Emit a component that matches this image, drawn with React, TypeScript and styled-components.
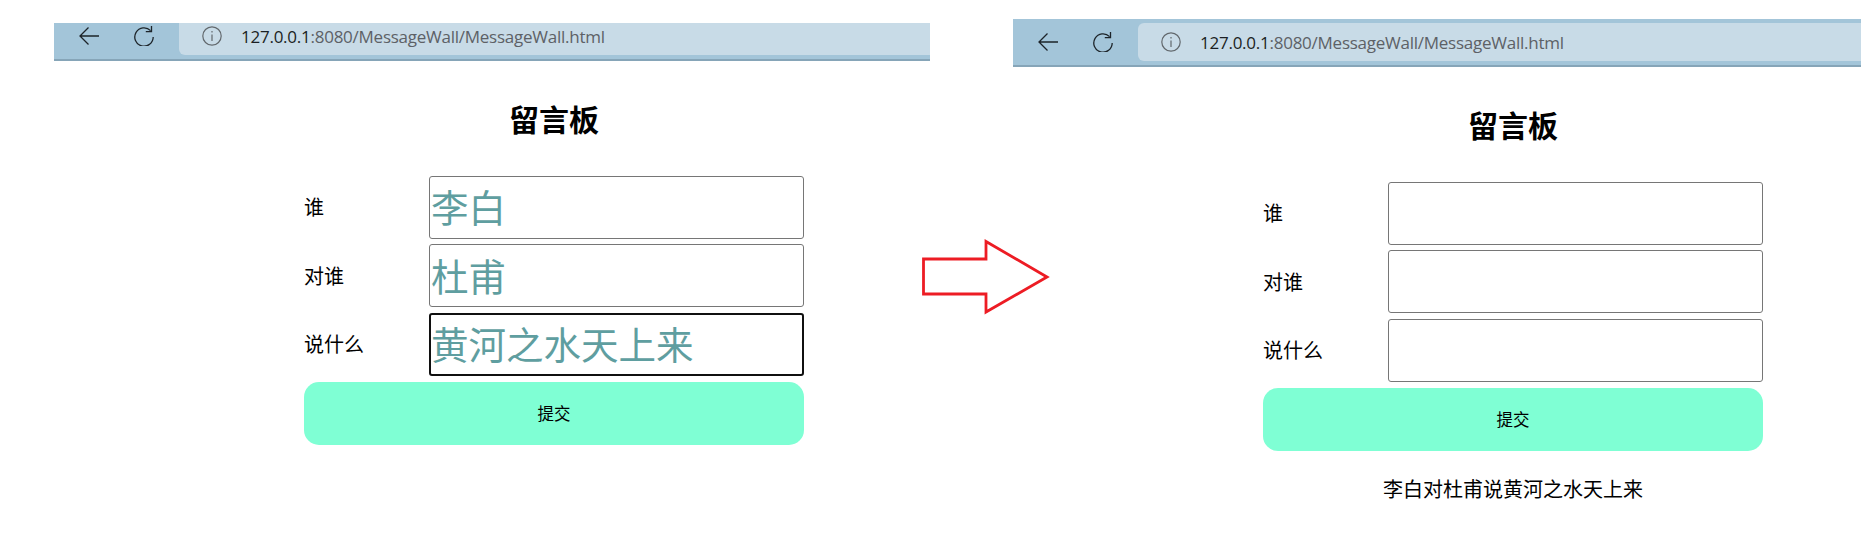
import React from 'react'
import styled, { createGlobalStyle } from 'styled-components'

const GlobalStyle = createGlobalStyle`
  html, body {
    margin: 0;
    padding: 0;
    background: #fff;
    font-family: "Noto Sans CJK SC", "Liberation Sans", sans-serif;
  }
`

const Page = styled.div`
  position: relative;
  display: flex;
  width: 1861px;
  height: 544px;
  overflow: hidden;
`
const Panel = styled.section<{ $left: number; $top: number; $width: number }>`
  margin-left: ${p => p.$left}px;
  margin-top: ${p => p.$top}px;
  width: ${p => p.$width}px;
  flex: none;
`
// the first screenshot is cropped at the top, flex-end lets the bar clip there
const Toolbar = styled.div<{ $height: number }>`
  display: flex;
  align-items: flex-end;
  height: ${p => p.$height}px;
  box-sizing: border-box;
  overflow: hidden;
  background: #a3c5d9;
  border-bottom: 2px solid #86a5b8;
  padding-bottom: 4px;
`
const NavIcons = styled.div`
  display: flex;
  align-items: center;
  gap: 35px;
  box-sizing: border-box;
  width: 125px;
  height: 38px;
  padding-left: 25px;
  flex: none;
`
const AddressBar = styled.div`
  display: flex;
  align-items: center;
  flex: 1;
  flex-shrink: 0;
  height: 38px;
  gap: 19px;
  padding-left: 23px;
  background: #c8dbe7;
  border-radius: 6px 0 0 6px;
`
const Url = styled.span`
  font-family: "Open Sans", sans-serif;
  font-size: 17px;
  letter-spacing: -0.25px;
  color: #5d6166;
  b {
    font-weight: 400;
    color: #1b1f23;
  }
`
const Wall = styled.div`
  width: 500px;
  margin-left: 250px;
  padding-top: 37px;
`
const Title = styled.h2`
  margin: 0 0 37.5px;
  font-size: 30px;
  line-height: 40px;
  font-weight: 700;
  color: #000;
  text-align: center;
`
const Row = styled.div`
  display: grid;
  grid-template-columns: 125px 375px;
  align-items: center;
  height: 63px;
  margin-bottom: 5.7px;
`
const Label = styled.label`
  font-size: 20px;
  color: #000;
  margin-top: -1px;
`
const Field = styled.input<{ $focused?: boolean }>`
  box-sizing: border-box;
  width: 375px;
  height: 63px;
  padding: 0 1px 3px ${p => (p.$focused ? 0 : 1)}px;
  font-family: inherit;
  font-size: 37.5px;
  color: cadetblue;
  background: #fff;
  border: ${p => (p.$focused ? '2px solid #101010' : '1px solid #767676')};
  border-radius: 3px;
  outline: none;
`
const Submit = styled.button`
  display: block;
  width: 500px;
  height: 63px;
  border: none;
  border-radius: 15px;
  background: aquamarine;
  color: #000;
  font-family: inherit;
  font-size: 16.5px;
`
const Result = styled.p`
  margin: 23px 0 0;
  font-size: 20px;
  line-height: 30px;
  text-align: center;
  color: #000;
`
const Arrow = styled.svg`
  position: absolute;
  left: 922px;
  top: 239px;
`

const BackIcon = () => (
  <svg width="20" height="20" viewBox="0 0 20 20" fill="none" stroke="#1d2429" strokeWidth="1.3">
    <path d="M20 10H1M9.5 1.5L1 10l8.5 8.5" />
  </svg>
)
const ReloadIcon = () => (
  <svg width="20" height="20" viewBox="0 0 20 20" fill="none" stroke="#1d2429" strokeWidth="1.3">
    <path d="M16.6 4.6A9.2 9.2 0 1 0 19.2 11" />
    <path d="M17.5 0v5.6H11.8" />
  </svg>
)
const InfoIcon = () => (
  <svg width="20" height="20" viewBox="0 0 20 20" fill="none" stroke="#62686d" strokeWidth="1.2">
    <circle cx="10" cy="10" r="9.2" />
    <path d="M10 8.5V15M10 5v1.5" />
  </svg>
)

const Browser = ({ height }: { height: number }) => (
  <Toolbar $height={height}>
    <NavIcons>
      <BackIcon />
      <ReloadIcon />
    </NavIcons>
    <AddressBar>
      <InfoIcon />
      <Url>
        <b>127.0.0.1</b>:8080/MessageWall/MessageWall.html
      </Url>
    </AddressBar>
  </Toolbar>
)

const rows = [
  { label: '谁', value: '李白' },
  { label: '对谁', value: '杜甫' },
  { label: '说什么', value: '黄河之水天上来' }
]

const App = () => (
  <Page>
    <GlobalStyle />
    <Panel $left={54} $top={23} $width={876}>
      <Browser height={38} />
      <Wall>
        <Title>留言板</Title>
        {rows.map((r, i) => (
          <Row key={r.label}>
            <Label>{r.label}</Label>
            <Field readOnly value={r.value} $focused={i === 2} />
          </Row>
        ))}
        <Submit>提交</Submit>
      </Wall>
    </Panel>
    <Panel $left={83} $top={19} $width={848}>
      <Browser height={48} />
      <Wall>
        <Title>留言板</Title>
        {rows.map(r => (
          <Row key={r.label}>
            <Label>{r.label}</Label>
            <Field readOnly value="" />
          </Row>
        ))}
        <Submit>提交</Submit>
        <Result>李白对杜甫说黄河之水天上来</Result>
      </Wall>
    </Panel>
    <Arrow width="130" height="76" viewBox="0 0 130 76">
      <path d="M1.5 20H64V2.5L125 38 64 73V55H1.5Z" fill="none" stroke="#ed1c24" strokeWidth="2.8" />
    </Arrow>
  </Page>
)

export default App
